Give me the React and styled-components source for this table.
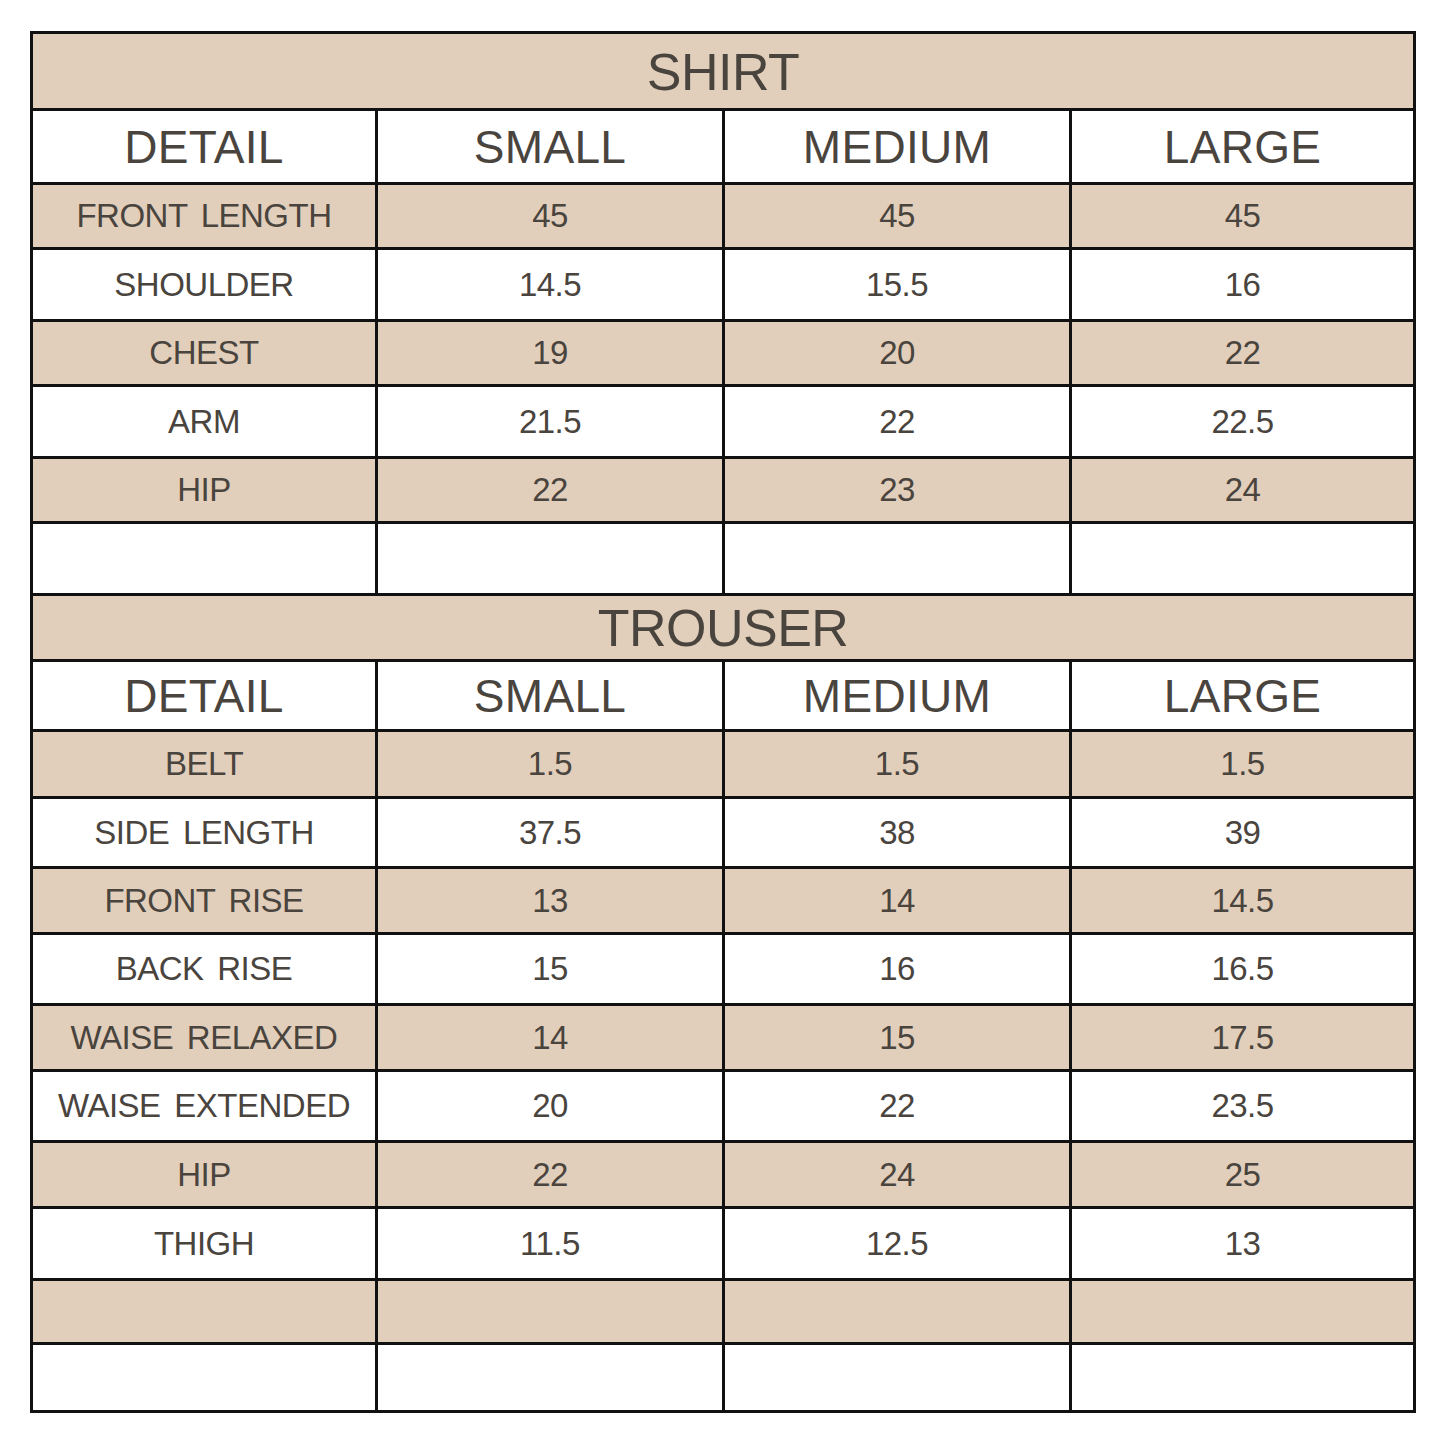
import React from "react";
import styled, { createGlobalStyle } from "styled-components";

const GlobalStyle = createGlobalStyle`
  html, body { margin: 0; padding: 0; background: #ffffff; }
  body { font-family: "Liberation Sans", Arial, sans-serif; }
`;

const BEIGE = "#e2cfbb";
const INK = "#4a443e";
const LINE = "#111111";

const Page = styled.div`
  padding: 31px 0 31px 30px;
`;

const Sheet = styled.div`
  width: 1386px;
  box-sizing: border-box;
  border: 3px solid ${LINE};
  display: flex;
  flex-direction: column;
  background: #ffffff;
`;

const TitleBar = styled.div`
  height: ${(p) => p.$h}px;
  box-sizing: border-box;
  border-bottom: 3px solid ${LINE};
  background: ${BEIGE};
  display: flex;
  align-items: center;
  justify-content: center;
  color: ${INK};
  font-size: 52px;
  letter-spacing: -0.5px;
  padding-top: 1px;
`;

const Row = styled.div`
  display: grid;
  grid-template-columns: 342px 347px 347px 344px;
  height: ${(p) => p.$h}px;
  box-sizing: border-box;
  border-bottom: ${(p) => (p.$last ? "none" : `3px solid ${LINE}`)};
  background: ${(p) => (p.$tone === "beige" ? BEIGE : "#ffffff")};
`;

const Cell = styled.div`
  box-sizing: border-box;
  border-left: ${(p) => (p.$first ? "none" : `3px solid ${LINE}`)};
  display: flex;
  align-items: center;
  justify-content: center;
  color: ${INK};
  font-size: ${(p) => (p.$head ? 46 : 33)}px;
  letter-spacing: ${(p) => (p.$head ? "0.3px" : "-0.5px")};
  word-spacing: ${(p) => (p.$head ? "0" : "5px")};
  white-space: nowrap;
  padding-top: ${(p) => (p.$head ? 1 : 0)}px;
`;

const shirtRows = [
  { h: 65, tone: "beige", cells: ["FRONT LENGTH", "45", "45", "45"] },
  { h: 72, tone: "white", cells: ["SHOULDER", "14.5", "15.5", "16"] },
  { h: 65, tone: "beige", cells: ["CHEST", "19", "20", "22"] },
  { h: 72, tone: "white", cells: ["ARM", "21.5", "22", "22.5"] },
  { h: 65, tone: "beige", cells: ["HIP", "22", "23", "24"] },
  { h: 72, tone: "white", cells: ["", "", "", ""] },
];

const trouserRows = [
  { h: 67, tone: "beige", cells: ["BELT", "1.5", "1.5", "1.5"] },
  { h: 70, tone: "white", cells: ["SIDE LENGTH", "37.5", "38", "39"] },
  { h: 66, tone: "beige", cells: ["FRONT RISE", "13", "14", "14.5"] },
  { h: 71, tone: "white", cells: ["BACK RISE", "15", "16", "16.5"] },
  { h: 66, tone: "beige", cells: ["WAISE RELAXED", "14", "15", "17.5"] },
  { h: 71, tone: "white", cells: ["WAISE EXTENDED", "20", "22", "23.5"] },
  { h: 66, tone: "beige", cells: ["HIP", "22", "24", "25"] },
  { h: 72, tone: "white", cells: ["THIGH", "11.5", "12.5", "13"] },
  { h: 64, tone: "beige", cells: ["", "", "", ""] },
  { h: 65, tone: "white", cells: ["", "", "", ""], last: true },
];

const heads = ["DETAIL", "SMALL", "MEDIUM", "LARGE"];

function HeadRow({ h }) {
  return (
    <Row $h={h} $tone="white">
      {heads.map((t, i) => (
        <Cell key={t} $first={i === 0} $head>
          {t}
        </Cell>
      ))}
    </Row>
  );
}

function DataRows({ rows }) {
  return rows.map((r, ri) => (
    <Row key={ri} $h={r.h} $tone={r.tone} $last={r.last}>
      {r.cells.map((c, i) => (
        <Cell key={i} $first={i === 0}>
          {c}
        </Cell>
      ))}
    </Row>
  ));
}

export default function App() {
  return (
    <>
      <GlobalStyle />
      <Page>
        <Sheet>
          <TitleBar $h={77}>SHIRT</TitleBar>
          <HeadRow h={74} />
          <DataRows rows={shirtRows} />
          <TitleBar $h={66}>TROUSER</TitleBar>
          <HeadRow h={70} />
          <DataRows rows={trouserRows} />
        </Sheet>
      </Page>
    </>
  );
}
